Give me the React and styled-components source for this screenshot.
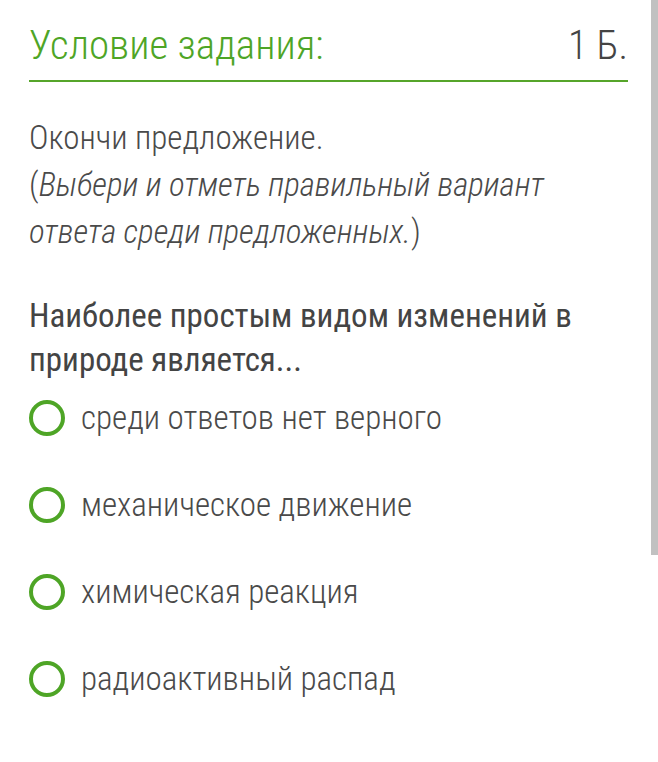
import React from "react";
import styled, { createGlobalStyle } from "styled-components";

const GlobalStyle = createGlobalStyle`
  html, body {
    margin: 0;
    padding: 0;
    background: #fff;
  }
  body {
    font-family: "Roboto Condensed", Roboto, "Liberation Sans", sans-serif;
    color: #444;
    overflow: hidden;
  }
`;

const Page = styled.div`
  padding: 19px 30px 40px 29px;
`;

const Header = styled.div`
  display: flex;
  justify-content: space-between;
  align-items: baseline;
  padding-bottom: 8px;
  border-bottom: 2px solid #56a52a;
`;

const Title = styled.h1`
  margin: 0;
  font-size: 41px;
  line-height: 52px;
  font-weight: 300;
  color: #4ea526;
`;

const Points = styled.span`
  font-size: 40px;
  line-height: 52px;
  font-weight: 300;
  color: #444;
`;

const Intro = styled.p`
  margin: 32px 0 0;
  font-size: 33px;
  line-height: 47px;
  font-weight: 300;
  color: #4a4a4a;
`;

const Hint = styled.em`
  font-style: italic;
`;

const Question = styled.p`
  margin: 39px 0 0;
  font-size: 33px;
  line-height: 44px;
  font-weight: 400;
  color: #444;
`;

const Options = styled.ul`
  list-style: none;
  margin: 14px 0 0;
  padding: 0;
  display: flex;
  flex-direction: column;
  gap: 43px;
`;

const Option = styled.li`
  display: flex;
  align-items: center;
  gap: 16px;
  font-size: 33px;
  line-height: 44px;
  font-weight: 300;
  color: #4a4a4a;
`;

const Radio = styled.span`
  flex: none;
  box-sizing: border-box;
  width: 36px;
  height: 36px;
  border: 4px solid #4ea526;
  border-radius: 50%;
`;

const Scrollbar = styled.div`
  position: fixed;
  top: 0;
  right: 0;
  width: 7px;
  height: 555px;
  background: #c1c1c1;
`;

const answers = [
  "среди ответов нет верного",
  "механическое движение",
  "химическая реакция",
  "радиоактивный распад",
];

const App = () => {
  return (
    <Page>
      <GlobalStyle />
      <Header>
        <Title>Условие задания:</Title>
        <Points>1 Б.</Points>
      </Header>
      <Intro>
        Окончи предложение.
        <br />
        (<Hint>Выбери и отметь правильный вариант ответа среди предложенных.</Hint>)
      </Intro>
      <Question>Наиболее простым видом изменений в природе является...</Question>
      <Options>
        {answers.map((a) => (
          <Option key={a}>
            <Radio />
            {a}
          </Option>
        ))}
      </Options>
      <Scrollbar />
    </Page>
  );
};

export default App;
